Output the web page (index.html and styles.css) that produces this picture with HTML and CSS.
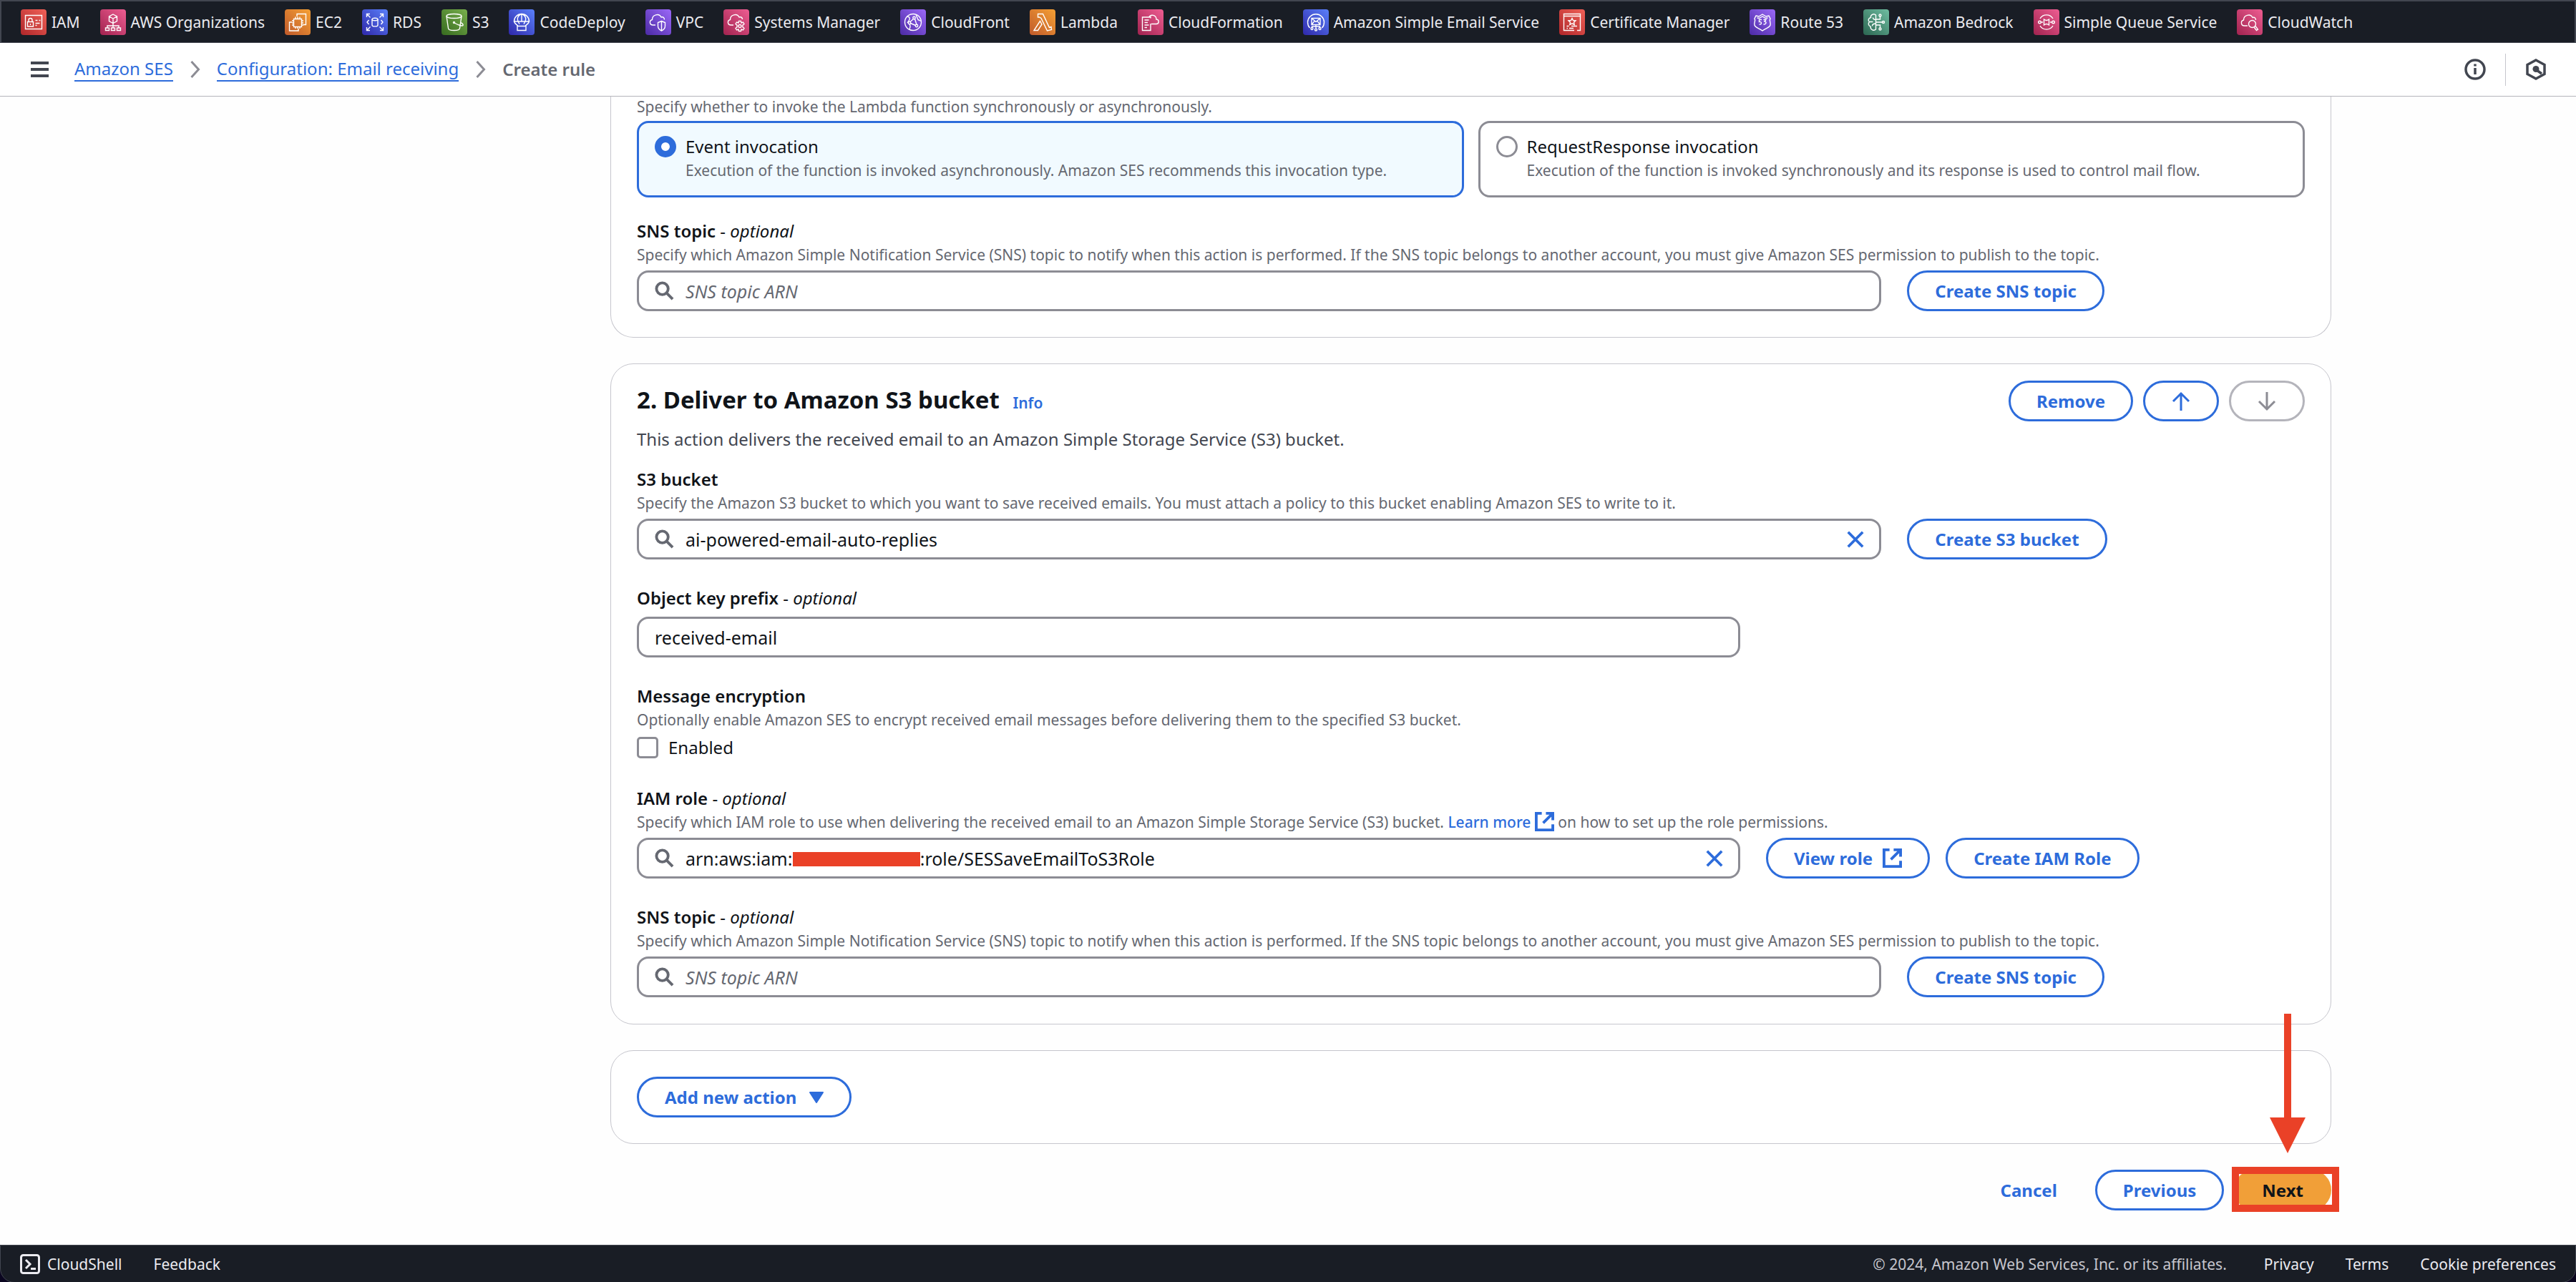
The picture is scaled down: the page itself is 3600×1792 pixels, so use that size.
FILE: index.html
```
<!DOCTYPE html>
<html lang="en">
<head>
<meta charset="utf-8">
<title>Create rule - Amazon SES</title>
<link rel="stylesheet" href="styles.css">
</head>
<body>
<svg class="defs" aria-hidden="true">
  <symbol id="search" viewBox="0 0 28 28"><circle cx="11" cy="11" r="8.5"/><path d="M17 17l9 9"/></symbol>
  <symbol id="close" viewBox="0 0 28 28"><path d="M3 3l22 22M25 3L3 25"/></symbol>
  <symbol id="external" viewBox="0 0 28 28"><path d="M10 2H2v24h24v-8M16 2h10v10M26 2L12 16"/></symbol>
</svg>

<nav class="services" aria-label="Favorites">
  <a href="#" class="service"><svg class="tile red" viewBox="0 0 36 36"><path d="M6.500 8.500h23v19h-23zM9.500 17.500h8v6.500h-8zM11 17.500v-2.500a2.500 2.500 0 0 1 5 0v2.500M13.500 20v2M20.500 15.500h3M25.500 15.500h2M20.500 19.500h6M20.500 22.500h2"/></svg>IAM</a>
  <a href="#" class="service"><svg class="tile pink" viewBox="0 0 36 36"><path d="M18 7l5.500 3v6.500L18 19.500l-5.500-3V10zM12.500 10l5.500 3 5.500-3M18 13v13M10 26v-3h16v3M7.500 26h5v3.500h-5zM15.500 26h5v3.500h-5zM23.500 26h5v3.500h-5z"/></svg>AWS Organizations</a>
  <a href="#" class="service"><svg class="tile orange" viewBox="0 0 36 36"><path d="M12.500 13.500h11v11h-11zM15 13.500v-3M18 13.500v-3M21 13.500v-3M15 27v-2.500M18 27v-2.500M21 27v-2.500M12.500 16H10M12.500 19H10M12.500 22H10M26 16h-2.500M26 19h-2.500M26 22h-2.500M17 10V6.500h12.500v15H26M10 18H6.500v12H19v-3"/></svg>EC2</a>
  <a href="#" class="service"><svg class="tile blue" viewBox="0 0 36 36"><ellipse cx="18" cy="14" rx="4" ry="1.800"/><path d="M14 14v8c0 2.500 8 2.500 8 0v-8M6.500 11V6.500H11M7 7l4.500 4.500M25 6.500h4.500V11M29 7l-4.500 4.500M6.500 25v4.500H11M7 29l4.500-4.500M25 29.500h4.500V25M29 29l-4.500-4.500M9.500 15L7 18l2.500 3M26.500 15l2.500 3-2.500 3"/></svg>RDS</a>
  <a href="#" class="service"><svg class="tile green" viewBox="0 0 36 36"><ellipse cx="17.500" cy="9.500" rx="10.500" ry="3"/><path d="M7 9.500l2.500 17c0 4 16 4 16 0L28 9.500M18 19c4 2.500 11 5 12 3.500S28 19 26.500 18.500"/><circle cx="17.500" cy="18.500" r="1"/></svg>S3</a>
  <a href="#" class="service"><svg class="tile blue" viewBox="0 0 36 36"><path d="M7.500 17a10.500 10.500 0 0 1 21 0zM18 6.500c-7 3-7 8-3 14M18 6.500c7 3 7 8 3 14M18 6.500V17M7.500 17c1 4 5 4.500 5.500 7M28.500 17c-1 4-5 4.500-5.500 7M12 23.500h12v6H12z"/></svg>CodeDeploy</a>
  <a href="#" class="service"><svg class="tile purple" viewBox="0 0 36 36"><path d="M14 22h-3.500c-5 0-5.500-6.500-1-7.500 0-7 9.500-9.500 12.500-3.500 3-1 4.500 1 4.500 3.500M22.500 16.500l5 2v5c0 3-2 5-5 6.500-3-1.500-5-3.500-5-6.500v-5zM22.500 16.500V30"/></svg>VPC</a>
  <a href="#" class="service"><svg class="tile pink" viewBox="0 0 36 36"><path d="M14 22h-3.500c-5 0-5.500-6.500-1-7.500 0-7 9.500-9.500 12.500-3.500 3-1 4.500 1 4.500 3"/><circle cx="23" cy="23.500" r="2"/><path d="M21.500 16.500h3l.5 2.500 2.500-1 1.500 2.500-2 1.500v3l2 1.500-1.500 2.500-2.500-1-.5 2.500h-3l-.5-2.500-2.500 1-1.500-2.500 2-1.500v-3l-2-1.500 1.500-2.500 2.500 1z"/></svg>Systems Manager</a>
  <a href="#" class="service"><svg class="tile purple" viewBox="0 0 36 36"><circle cx="18" cy="18" r="11.500"/><circle cx="19.500" cy="12" r="1.700"/><circle cx="13" cy="19" r="1.700"/><circle cx="23" cy="23" r="1.700"/><path d="M18.500 13.500L14 17.500M14.500 19.500l7 3M20.500 13.500l2.500 8M10 10c5 1 4 4 0 9M13 28c1-3 2-5 0-7.500M22 7.500l3 7c2 1 3 1 4 2"/></svg>CloudFront</a>
  <a href="#" class="service"><svg class="tile orange" viewBox="0 0 36 36"><path d="M11.500 6.500h7l9 19 2.500-1 .5 4-6 1.500L16 12.500 13.500 11h-2zM14.500 16.500l-8.500 13h5.500l5.500-8.500z"/></svg>Lambda</a>
  <a href="#" class="service"><svg class="tile pink" viewBox="0 0 36 36"><path d="M18 12.500V11H6.500v18.500H18V20M9.500 15h6M9.500 18.500h4.500M9.500 22h6M9.500 25.500h3.500M19 20.500h7c4 0 4.500-6 0-6.500 0-6-8-8-10.500-2.500"/></svg>CloudFormation</a>
  <a href="#" class="service"><svg class="tile blue" viewBox="0 0 36 36"><path d="M9.500 26a11.500 11.500 0 1 1 17 0M12 12.500h12v9H12zM12 12.500l6 5 6-5M12 21.500l4-5M24 21.500l-4-5M18 21.500V26M12.500 26v-2h11v2"/><circle cx="12.500" cy="27" r="1.500"/><circle cx="18" cy="28.500" r="1.500"/><circle cx="23.500" cy="27" r="1.500"/></svg>Amazon Simple Email Service</a>
  <a href="#" class="service"><svg class="tile red" viewBox="0 0 36 36"><path d="M21 29.500H6.500v-23h23v23H25M6.500 9.500h23M18 12.500l1.500 3 3.500.3-2.500 2.500.7 3.200-3.200-1.600-3.200 1.600.7-3.200-2.500-2.500 3.500-.3zM10.500 23.500h3M17 23.500h8M10.500 26.500h1.500M14 26.500h6"/></svg>Certificate Manager</a>
  <a href="#" class="service"><svg class="tile purple" viewBox="0 0 36 36"><path d="M9 9l4 1 5-3 5 3 4-1 2 4c-2 3 1 5 0 9-1 4-6 4-11 8-5-4-10-4-11-8-1-4 2-6 0-9z"/><path d="M10.500 12l3 .5 4.500-2.500 4.500 2.500 3-.5M17 14.500h-3.500v3c4-1 4 4.500 0 3.500M19.500 14.500H23L21 17c3 0 3 4.500-1.500 4"/></svg>Route 53</a>
  <a href="#" class="service"><svg class="tile teal" viewBox="0 0 36 36"><path d="M17.500 8c-3-3-8 0-7 3.500-4 1-4 4.500-2 6-2 2-1.500 5.500 1.500 6.500 0 5 5 6.500 7.500 4zM17.500 14.500c-3 0-4-1-4-3M17.500 20c-3 0-5 1-5 3.500M9 17.500h4.500M17.500 14h6V10M17.500 18h9M17.500 22h6v4"/><circle cx="23.500" cy="8.500" r="1.500"/><circle cx="28" cy="18" r="1.500"/><circle cx="23.500" cy="27.500" r="1.500"/></svg>Amazon Bedrock</a>
  <a href="#" class="service"><svg class="tile pink" viewBox="0 0 36 36"><path d="M9 13a10.500 10.500 0 0 1 18 0M9 23a10.500 10.500 0 0 0 18 0M14.500 14c3 2 4 2 7 0v8c-3-2-4-2-7 0zM10.500 18H13M23 18h2.500"/><circle cx="8.500" cy="18" r="1.800"/><circle cx="27.500" cy="18" r="1.800"/></svg>Simple Queue Service</a>
  <a href="#" class="service"><svg class="tile pink" viewBox="0 0 36 36"><path d="M15 23h-4.500c-5 0-5.500-7-1-8 0-7 9.500-9.500 12.500-3.500 3-1 4.500 1 4.500 3.500"/><circle cx="21.500" cy="20.500" r="5"/><path d="M24 25l3.500 4.500 2-1.500-3.500-4.500"/></svg>CloudWatch</a>
</nav>

<header class="bar">
  <button type="button" class="plain" aria-label="Open navigation"><svg class="menu-icon" viewBox="0 0 25 24"><path d="M0 3h25M0 12h25M0 21h25"/></svg></button>
  <nav class="crumbs" aria-label="Breadcrumbs">
    <a href="#">Amazon SES</a>
    <svg class="chevron" viewBox="0 0 14 24"><path d="M2 1l10 11L2 23"/></svg>
    <a href="#">Configuration: Email receiving</a>
    <svg class="chevron" viewBox="0 0 14 24"><path d="M2 1l10 11L2 23"/></svg>
    <span class="current">Create rule</span>
  </nav>
  <div class="tools">
    <button type="button" class="plain" aria-label="Help panel"><svg class="tool-icon" viewBox="0 0 30 30"><circle cx="15" cy="15" r="13"/><path d="M15 13v9M15 7.500v3"/></svg></button>
    <span class="divider"></span>
    <button type="button" class="plain" aria-label="Assistant"><svg class="tool-icon" viewBox="0 0 30 30"><path d="M15 2l12 6.500v13L15 28 3 21.500v-13z"/><circle cx="15" cy="14.500" r="4.500" class="solid"/><path d="M16 16l7 5"/></svg></button>
  </div>
</header>

<main class="content">
  <section class="card card-scrolled">
    <fieldset class="field invocation" aria-label="Invocation type">
      <p class="hint lead">Specify whether to invoke the Lambda function synchronously or asynchronously.</p>
      <div class="tiles">
        <label class="option selected">
          <input type="radio" name="invocation" checked>
          <span><span class="option-title">Event invocation</span><span class="hint">Execution of the function is invoked asynchronously. Amazon SES recommends this invocation type.</span></span>
        </label>
        <label class="option">
          <input type="radio" name="invocation">
          <span><span class="option-title">RequestResponse invocation</span><span class="hint">Execution of the function is invoked synchronously and its response is used to control mail flow.</span></span>
        </label>
      </div>
    </fieldset>
    <div class="field">
      <label class="label" for="sns-1">SNS topic <em>- <i>optional</i></em></label>
      <p class="hint">Specify which Amazon Simple Notification Service (SNS) topic to notify when this action is performed. If the SNS topic belongs to another account, you must give Amazon SES permission to publish to the topic.</p>
      <div class="row control">
        <div class="box wide"><svg class="search"><use href="#search"/></svg><input id="sns-1" type="text" placeholder="SNS topic ARN"></div>
        <div class="actions"><button type="button" class="btn">Create SNS topic</button></div>
      </div>
    </div>
  </section>

  <section class="card card-action">
    <div class="card-head">
      <h2>2. Deliver to Amazon S3 bucket <a href="#" class="info">Info</a></h2>
      <div class="head-buttons">
        <button type="button" class="btn">Remove</button>
        <button type="button" class="btn" aria-label="Move up"><svg class="arrow" viewBox="0 0 28 28"><path d="M14 27V3M3 14L14 3l11 11"/></svg></button>
        <button type="button" class="btn" disabled aria-label="Move down"><svg class="arrow" viewBox="0 0 28 28"><path d="M14 1v24M3 14l11 11 11-11"/></svg></button>
      </div>
    </div>
    <p class="description">This action delivers the received email to an Amazon Simple Storage Service (S3) bucket.</p>
    <div class="fields">
      <div class="field">
        <label class="label" for="bucket">S3 bucket</label>
        <p class="hint">Specify the Amazon S3 bucket to which you want to save received emails. You must attach a policy to this bucket enabling Amazon SES to write to it.</p>
        <div class="row control">
          <div class="box wide"><svg class="search"><use href="#search"/></svg><input id="bucket" type="text" value="ai-powered-email-auto-replies"><button type="button" class="plain" aria-label="Clear"><svg class="clear"><use href="#close"/></svg></button></div>
          <div class="actions"><button type="button" class="btn">Create S3 bucket</button></div>
        </div>
      </div>
      <div class="field">
        <label class="label" for="prefix">Object key prefix <em>- <i>optional</i></em></label>
        <div class="row control">
          <div class="box"><input id="prefix" type="text" value="received-email"></div>
        </div>
      </div>
      <div class="field">
        <span class="label">Message encryption</span>
        <p class="hint">Optionally enable Amazon SES to encrypt received email messages before delivering them to the specified S3 bucket.</p>
        <label class="check control"><input type="checkbox">Enabled</label>
      </div>
      <div class="field">
        <label class="label" for="role">IAM role <em>- <i>optional</i></em></label>
        <p class="hint">Specify which IAM role to use when delivering the received email to an Amazon Simple Storage Service (S3) bucket. <a href="#">Learn more <svg class="external"><use href="#external"/></svg></a> on how to set up the role permissions.</p>
        <div class="row control">
          <div class="box"><svg class="search"><use href="#search"/></svg><input id="role" type="text" value="arn:aws:iam::000000000000:role/SESSaveEmailToS3Role"><span class="redaction"></span><button type="button" class="plain" aria-label="Clear"><svg class="clear"><use href="#close"/></svg></button></div>
          <div class="actions"><button type="button" class="btn">View role <svg class="external"><use href="#external"/></svg></button><button type="button" class="btn">Create IAM Role</button></div>
        </div>
      </div>
      <div class="field">
        <label class="label" for="sns-2">SNS topic <em>- <i>optional</i></em></label>
        <p class="hint">Specify which Amazon Simple Notification Service (SNS) topic to notify when this action is performed. If the SNS topic belongs to another account, you must give Amazon SES permission to publish to the topic.</p>
        <div class="row control">
          <div class="box wide"><svg class="search"><use href="#search"/></svg><input id="sns-2" type="text" placeholder="SNS topic ARN"></div>
          <div class="actions"><button type="button" class="btn">Create SNS topic</button></div>
        </div>
      </div>
    </div>
  </section>

  <section class="card">
    <button type="button" class="btn">Add new action <svg class="caret" viewBox="0 0 20 16"><path d="M1 1h18l-9 14z"/></svg></button>
  </section>

  <div class="wizard">
    <button type="button" class="btn link">Cancel</button>
    <button type="button" class="btn">Previous</button>
    <div class="next">
      <button type="button" class="btn primary">Next</button>
      <span class="frame"></span>
      <svg class="pointer" viewBox="0 0 50 195"><path d="M20 0h10v145h20L25 195 0 145h20z"/></svg>
    </div>
  </div>
</main>

<footer class="footer">
  <a href="#" class="shell"><svg viewBox="0 0 28 28"><rect x="1.500" y="1.500" width="25" height="25" rx="3"/><path d="M8 8l6 6-6 6M15 20.500h7"/></svg>CloudShell</a>
  <a href="#">Feedback</a>
  <span class="copyright">© 2024, Amazon Web Services, Inc. or its affiliates.</span>
  <a href="#">Privacy</a>
  <a href="#">Terms</a>
  <a href="#">Cookie preferences</a>
</footer>
</body>
</html>
```
FILE: styles.css
```
:root {
  --blue: #2d6cdb;
  --dark: #191d25;
  --edge: #424650;
  --text: #101419;
  --muted: #656871;
  --control: #8c8c94;
  --line: #c6c6cd;
  --mark: #ea4127;
}

* { box-sizing: border-box; }

html { background: #0b0620; }

body {
  margin: 0;
  min-height: 100vh;
  display: flex;
  flex-direction: column;
  color: var(--text);
  font: 24px/34px "Noto Sans", "Open Sans", sans-serif;
}

p, h2 { margin: 0; }
a { color: var(--blue); text-decoration: none; }
svg { fill: none; stroke: currentColor; flex: none; }
button, input { font: inherit; color: inherit; margin: 0; }
.defs { display: none; }

.plain {
  display: flex;
  padding: 0;
  border: 0;
  background: none;
}

/* Favourite services */
.services {
  display: flex;
  align-items: center;
  gap: 28px;
  height: 60px;
  padding: 0 27px;
  border: 2px solid var(--edge);
  border-bottom-width: 1px;
  background: var(--dark);
}

.service {
  display: flex;
  align-items: center;
  gap: 7px;
  color: #ebebf0;
  font-size: 21px;
  white-space: nowrap;
}

.tile {
  width: 36px;
  height: 36px;
  border-radius: 4px;
  stroke: #fff;
  stroke-width: 1.4;
}

.red { background: linear-gradient(45deg, #b0272a, #ef6057); }
.pink { background: linear-gradient(45deg, #a1234f, #ee5d92); }
.orange { background: linear-gradient(45deg, #c05a2b, #f5a034); }
.blue { background: linear-gradient(45deg, #2f28aa, #5a80fa); }
.green { background: linear-gradient(45deg, #376b20, #78af4c); }
.purple { background: linear-gradient(45deg, #4b2aa4, #9b68f8); }
.teal { background: linear-gradient(45deg, #2b6651, #6fbda1); }

/* Breadcrumb bar */
.bar {
  display: flex;
  align-items: center;
  gap: 36px;
  height: 75px;
  padding: 0 41px 0 43px;
  border-bottom: 1px solid #b4b4bb;
  background: #fff;
  color: var(--edge);
}

.menu-icon { width: 25px; height: 24px; stroke-width: 4; }

.crumbs {
  display: flex;
  align-items: center;
  gap: 23px;
}

.crumbs a { border-bottom: 2px solid var(--blue); line-height: 32px; }
.chevron { width: 15px; height: 24px; stroke: var(--control); stroke-width: 3; }
.current { color: var(--muted); font-weight: 600; }

.tools {
  display: flex;
  align-items: center;
  gap: 27px;
  margin-left: auto;
}

.tool-icon { width: 30px; height: 30px; stroke-width: 3.5; }
.solid { fill: currentColor; stroke: none; }
.divider { width: 1px; height: 45px; background: var(--line); }

/* Form */
.content {
  flex: 1;
  display: flex;
  flex-direction: column;
  gap: 36px;
  padding: 0 342px 48px 853px;
  background: #fefefe;
}

.card {
  padding: 36px;
  border: 1px solid var(--line);
  border-radius: 32px;
  background: #fff;
}

.card-scrolled {
  display: flex;
  flex-direction: column;
  gap: 30px;
  padding-top: 0;
  border-top: 0;
  border-radius: 0 0 32px 32px;
}

.card-action { padding-top: 23px; padding-bottom: 37px; }

.card-head {
  display: flex;
  justify-content: space-between;
  align-items: center;
}

h2 { font-size: 33px; line-height: 40px; }
.info { margin-left: 10px; font-size: 21px; font-weight: 600; }
.head-buttons { display: flex; gap: 14px; }
.description { margin: 8px 0 22px; color: var(--edge); }

.fields {
  display: flex;
  flex-direction: column;
  gap: 37px;
}

.field { margin: 0; padding: 0; border: 0; min-width: 0; }
.label { display: block; font-weight: 600; }
.label em { font-style: normal; font-weight: 400; }

.hint {
  display: block;
  color: var(--muted);
  font-size: 21px;
  line-height: 32px;
}

.hint.lead { margin-bottom: 6px; line-height: 28px; }
.hint a { font-weight: 500; }
.label + .control { margin-top: 9px; }
.hint + .control { margin-top: 6px; }

.row {
  display: grid;
  grid-template-columns: repeat(12, 1fr);
  column-gap: 36px;
}

.box {
  grid-column: span 8;
  position: relative;
  display: flex;
  align-items: center;
  gap: 16px;
  height: 57px;
  padding: 0 20px 0 22px;
  border: 3px solid var(--control);
  border-radius: 16px;
  background: #fff;
}

.box.wide { grid-column: span 9; }

.box input {
  flex: 1;
  min-width: 0;
  padding: 0;
  border: 0;
  outline: 0;
  background: none;
  font-size: 25px;
}

.box input::placeholder { color: var(--muted); opacity: 1; font-style: italic; }
.search { width: 27px; height: 27px; color: var(--muted); stroke-width: 4; }
.clear { width: 26px; height: 26px; color: var(--blue); stroke-width: 4; }

/* Covers the account number */
.redaction {
  position: absolute;
  left: 215px;
  top: 17px;
  width: 178px;
  height: 20px;
  background: var(--mark);
}

.actions { grid-column: span 3; display: flex; gap: 22px; }
.external { width: 27px; height: 27px; stroke-width: 4; }
.hint .external { vertical-align: -5px; }

.tiles {
  display: grid;
  grid-template-columns: 1fr 1fr;
  gap: 20px;
}

.option {
  display: flex;
  gap: 13px;
  padding: 16px 22px 19px;
  border: 3px solid var(--control);
  border-radius: 16px;
}

.option.selected { border-color: var(--blue); background: #f1faff; }
.option-title { display: block; }

input[type="radio"], input[type="checkbox"] {
  appearance: none;
  flex: none;
  width: 30px;
  height: 30px;
  border: 3px solid var(--control);
  background: #fff;
}

input[type="radio"] { border-radius: 50%; margin-top: 2px; }
input[type="radio"]:checked { border: 9px solid var(--blue); }
input[type="checkbox"] { border-radius: 5px; }

.check { display: flex; align-items: center; gap: 14px; }

/* Buttons */
.btn {
  display: flex;
  align-items: center;
  gap: 14px;
  height: 57px;
  padding: 0 36px;
  border: 3px solid var(--blue);
  border-radius: 29px;
  background: #fff;
  color: var(--blue);
  font-weight: 700;
  white-space: nowrap;
}

.btn:disabled { border-color: #b4b4bb; color: var(--control); }
.btn.link { border-color: transparent; background: none; }
.btn.primary { border-color: #f19f38; background: #f19f38; color: var(--text); }
.arrow { width: 28px; height: 28px; stroke-width: 3; }
.caret { width: 20px; height: 16px; margin-left: 4px; fill: currentColor; stroke-linejoin: round; stroke-width: 2; }

.wizard {
  display: flex;
  justify-content: flex-end;
  gap: 14px;
}

.next { position: relative; }

.frame {
  position: absolute;
  inset: -4px -11px -2px -3px;
  border: 10px solid var(--mark);
}

.pointer {
  position: absolute;
  left: 50px;
  top: -218px;
  width: 50px;
  height: 195px;
  fill: var(--mark);
  stroke: none;
}

/* Footer */
.footer {
  display: flex;
  align-items: center;
  gap: 44px;
  height: 53px;
  padding: 0 27px;
  border: 1px solid var(--edge);
  border-radius: 0 0 20px 20px;
  background: var(--dark);
  box-shadow: 0 -20px 0 -19px #fefefe;
  font-size: 21px;
}

.footer a { color: #ebebf0; }
.shell { display: flex; align-items: center; gap: 10px; }
.shell svg { width: 28px; height: 28px; stroke-width: 3; }
.copyright { margin: 0 8px 0 auto; color: #c6c6cd; }
```
